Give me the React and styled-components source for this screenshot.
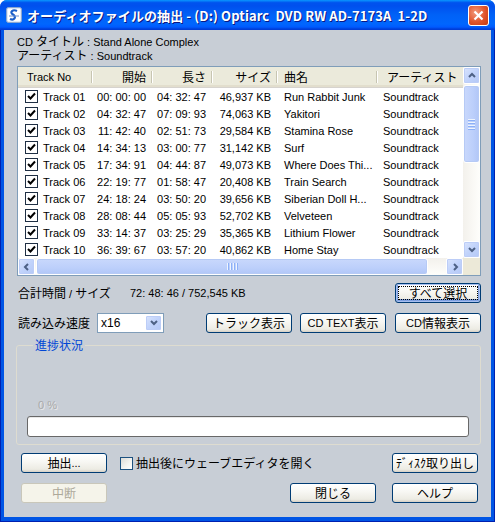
import React from "react";
import styled, { createGlobalStyle, css } from "styled-components";

const GlobalStyle = createGlobalStyle`
  html, body { margin: 0; padding: 0; background: #ffffff; }
  body {
    font-family: "Liberation Sans", "Noto Sans CJK JP", sans-serif;
    font-size: 11px;
    color: #000;
  }
  * { box-sizing: border-box; }
`;

const Jp = styled.span`
  font-family: "Noto Sans CJK JP", sans-serif;
  font-size: 12px;
`;

const Window = styled.div`
  width: 495px;
  height: 522px;
  display: flex;
  flex-direction: column;
  border-radius: 7px 7px 0 0;
  overflow: hidden;
  background: #0055e5;
`;

const TitleBar = styled.div`
  height: 30px;
  flex: none;
  display: flex;
  align-items: center;
  padding: 0 6px 0 6px;
  background: linear-gradient(
    180deg,
    #0997ff 0%,
    #0053ee 9%,
    #0050ee 20%,
    #0062f7 50%,
    #0066fe 80%,
    #005bff 90%,
    #003dd7 97%,
    #003dd7 100%
  );
`;

const TitleText = styled.div`
  margin-left: 5px;
  flex: 1;
  color: #fff;
  font-family: "Noto Sans CJK JP", sans-serif;
  font-weight: bold;
  font-size: 13px;
  letter-spacing: 0.1px;
  white-space: nowrap;
  text-shadow: 1px 1px 0 #0a1883;
`;

const CloseButton = styled.div`
  width: 21px;
  height: 21px;
  border: 1px solid #fff;
  border-radius: 3px;
  background: radial-gradient(circle at 35% 35%, #f29a7c 0%, #e0542b 55%, #c53a12 100%);
  display: flex;
  align-items: center;
  justify-content: center;
`;

const Frame = styled.div`
  flex: 1;
  display: flex;
  padding: 0 4px 5px 4px;
  background: #0055e5;
  box-shadow: inset 1px 0 #0020b0, inset -1px 0 #0020b0, inset 0 -1px #0020b0;
`;

const Body = styled.div`
  flex: 1;
  background: #c8ced6;
  padding: 4px 10px 0 13px;
  display: flex;
  flex-direction: column;
`;

const InfoLine = styled.div`
  height: 14px;
  line-height: 14px;
  white-space: nowrap;
`;

const ListBox = styled.div`
  margin-top: 4px;
  height: 210px;
  border: 1px solid #7f9db9;
  background: #fff;
  display: grid;
  grid-template-columns: 1fr 17px;
  grid-template-rows: 191px 17px;
`;

const ListArea = styled.div`
  overflow: hidden;
`;

const Header = styled.div`
  display: flex;
  height: 21px;
  background: #ebeadb;
  border-bottom: 1px solid #d6d3ce;
  box-shadow: inset 0 -2px #e2decd;
`;

const HeaderCell = styled.div`
  position: relative;
  flex: none;
  width: ${(p) => p.$w}px;
  padding: 0 ${(p) => (p.$right ? 6 : 0)}px 0 ${(p) => (p.$right ? 0 : p.$pl ?? 8)}px;
  display: flex;
  align-items: center;
  justify-content: ${(p) => (p.$right ? "flex-end" : "flex-start")};
  line-height: 14px;
  white-space: nowrap;
  &::after {
    content: "";
    position: absolute;
    right: 0;
    top: 4px;
    bottom: 4px;
    width: 1px;
    background: #c7c5b2;
    box-shadow: 1px 0 #fff;
  }
`;

const Row = styled.div`
  display: flex;
  height: 17px;
  align-items: center;
`;

const Cell = styled.div`
  flex: none;
  width: ${(p) => p.$w}px;
  display: flex;
  align-items: center;
  justify-content: ${(p) => (p.$right ? "flex-end" : "flex-start")};
  padding: 0 ${(p) => (p.$right ? p.$pr ?? 6 : 0)}px 0 ${(p) => (p.$right ? 0 : p.$pl ?? 7)}px;
  white-space: nowrap;
  overflow: hidden;
  line-height: 14px;
`;

const CheckBox = styled.div`
  width: 13px;
  height: 13px;
  flex: none;
  border: 1px solid ${(p) => (p.$light ? "#1c5180" : "#1f2f44")};
  background: ${(p) =>
    p.$light ? "linear-gradient(135deg, #dcdcd7 0%, #f5f5f2 60%, #ffffff 100%)" : "#fff"};
  display: flex;
  align-items: center;
  justify-content: center;
  margin-right: ${(p) => p.$mr ?? 5}px;
`;

const VScroll = styled.div`
  grid-row: 1;
  grid-column: 2;
  display: flex;
  flex-direction: column;
  background: linear-gradient(90deg, #f3f1ec 0%, #fefefb 100%);
`;

const HScroll = styled.div`
  grid-row: 2;
  grid-column: 1;
  display: flex;
  background: linear-gradient(180deg, #f3f1ec 0%, #fefefb 100%);
`;

const Corner = styled.div`
  grid-row: 2;
  grid-column: 2;
  background: #ece9d8;
`;

const ArrowBtn = styled.div`
  width: 17px;
  height: 17px;
  flex: none;
  border: 1px solid #fff;
  border-radius: 2px;
  background: linear-gradient(135deg, #d9e4fd 0%, #c1d3fb 50%, #b4c8f6 100%);
  box-shadow: inset 0 0 0 1px #bccdf7;
  display: flex;
  align-items: center;
  justify-content: center;
`;

const Track = styled.div`
  flex: 1;
  display: flex;
  flex-direction: ${(p) => (p.$vertical ? "column" : "row")};
  padding: ${(p) => (p.$vertical ? "1px 0" : "0 1px")};
`;

const Thumb = styled.div`
  flex: none;
  ${(p) =>
    p.$vertical
      ? css`
          height: ${p.$size}px;
          background: linear-gradient(90deg, #c9d8fc 0%, #bccffb 60%, #b1c6f7 100%);
          flex-direction: column;
        `
      : css`
          width: ${p.$size}px;
          background: linear-gradient(180deg, #c9d8fc 0%, #bccffb 60%, #b1c6f7 100%);
        `}
  border: 1px solid #fff;
  border-radius: 3px;
  box-shadow: inset 0 0 0 1px #b6caf5;
  display: flex;
  align-items: center;
  justify-content: center;
  gap: 1px;
`;

const Grip = styled.div`
  ${(p) =>
    p.$vertical
      ? css`
          width: 7px;
          height: 1px;
        `
      : css`
          width: 1px;
          height: 7px;
        `}
  background: #eef4fe;
  box-shadow: ${(p) => (p.$vertical ? "0 1px #8cb0f8" : "1px 0 #8cb0f8")};
  margin: ${(p) => (p.$vertical ? "0 0 1px 0" : "0 1px 0 0")};
`;

const FlexRow = styled.div`
  display: flex;
  align-items: center;
  margin-top: ${(p) => p.$mt}px;
`;

const Label = styled.div`
  white-space: nowrap;
  line-height: 14px;
  width: ${(p) => (p.$w ? `${p.$w}px` : "auto")};
  margin-left: ${(p) => p.$ml ?? 0}px;
  flex: none;
`;

const Spacer = styled.div`
  flex: 1;
`;

const Button = styled.div`
  width: 86px;
  height: 20px;
  flex: none;
  display: flex;
  align-items: center;
  justify-content: center;
  border: 1px solid ${(p) => (p.$disabled ? "#c9c7ba" : "#003c74")};
  border-radius: 3px;
  background: ${(p) =>
    p.$disabled
      ? "#f5f4ea"
      : "linear-gradient(180deg, #ffffff 0%, #f8f8f4 40%, #ecebe3 85%, #d6d0c5 100%)"};
  color: ${(p) => (p.$disabled ? "#aca899" : "#000")};
  white-space: nowrap;
  line-height: 14px;
  margin-left: ${(p) => p.$ml ?? 0}px;
  margin-right: ${(p) => p.$mr ?? 0}px;
  ${(p) =>
    p.$focused &&
    css`
      box-shadow: inset 0 0 0 1px #a7bff0, inset 0 -1px 0 2px #7d9fe0;
      outline: 1px dotted #000;
      outline-offset: -4px;
    `}
`;

const Select = styled.div`
  margin-left: ${(p) => p.$ml}px;
  width: 67px;
  height: 20px;
  border: 1px solid #7f9db9;
  background: #fff;
  display: flex;
  align-items: stretch;
`;

const SelectText = styled.div`
  flex: 1;
  padding-left: 3px;
  display: flex;
  align-items: center;
  font-size: 12px;
`;

const DropBtn = styled.div`
  width: 17px;
  margin: 1px;
  border: 1px solid #fff;
  border-radius: 2px;
  background: linear-gradient(135deg, #d9e4fd 0%, #c1d3fb 50%, #b4c8f6 100%);
  box-shadow: inset 0 0 0 1px #bccdf7;
  display: flex;
  align-items: center;
  justify-content: center;
`;

const Group = styled.fieldset`
  margin: 5px 0 0 -1px;
  padding: 46px 11px 7px 10px;
  border: 1px solid #dedcd0;
  border-radius: 3px;
  min-width: 0;
`;

const Legend = styled.legend`
  color: #0046d5;
  padding: 0 2px;
  margin-left: 6px;
  line-height: 14px;
`;

const Percent = styled.div`
  margin-left: 11px;
  line-height: 12px;
  font-size: 11px;
  color: #a9a9a9;
  text-shadow: 1px 1px 0 #e8e8e8;
`;

const Progress = styled.div`
  margin-top: 5px;
  height: 21px;
  border: 1px solid #686868;
  border-radius: 3px;
  background: #fff;
  box-shadow: inset 0 1px #e8e8e8;
`;

const CheckLabel = styled.div`
  display: flex;
  align-items: center;
  margin-left: ${(p) => p.$ml}px;
  white-space: nowrap;
  line-height: 14px;
`;

const COLS = [74, 60, 60, 65, 100, 120];

const tracks = [
  ["Track 01", "00: 00: 00", "04: 32: 47", "46,937 KB", "Run Rabbit Junk"],
  ["Track 02", "04: 32: 47", "07: 09: 93", "74,063 KB", "Yakitori"],
  ["Track 03", "11: 42: 40", "02: 51: 73", "29,584 KB", "Stamina Rose"],
  ["Track 04", "14: 34: 13", "03: 00: 77", "31,142 KB", "Surf"],
  ["Track 05", "17: 34: 91", "04: 44: 87", "49,073 KB", "Where Does Thi..."],
  ["Track 06", "22: 19: 77", "01: 58: 47", "20,408 KB", "Train Search"],
  ["Track 07", "24: 18: 24", "03: 50: 20", "39,656 KB", "Siberian Doll H..."],
  ["Track 08", "28: 08: 44", "05: 05: 93", "52,702 KB", "Velveteen"],
  ["Track 09", "33: 14: 37", "03: 25: 29", "35,365 KB", "Lithium Flower"],
  ["Track 10", "36: 39: 67", "03: 57: 20", "40,862 KB", "Home Stay"],
];

const Check = () => (
  <svg width="9" height="9" viewBox="0 0 9 9">
    <path d="M1 4 L3.5 6.5 L8 1.5" stroke="#000" strokeWidth="2" fill="none" />
  </svg>
);

const Chevron = ({ dir }) => {
  const paths = {
    up: "M2 6 L5 3 L8 6",
    down: "M2 3 L5 6 L8 3",
    left: "M6 2 L3 5 L6 8",
    right: "M4 2 L7 5 L4 8",
  };
  return (
    <svg width="10" height="10" viewBox="0 0 10 10">
      <path d={paths[dir]} stroke="#4d6185" strokeWidth="2" fill="none" />
    </svg>
  );
};

const AppIcon = () => (
  <svg width="16" height="16" viewBox="0 0 16 16">
    <rect x="0.5" y="0.5" width="15" height="15" rx="2" fill="#dfe9f7" stroke="#8aa6d0" />
    <rect x="2" y="2" width="12" height="12" fill="#ffffff" />
    <path d="M11 4 C7 2, 3 5, 7 7.5 C11 10, 8 14, 4 12" stroke="#1b5fc9" strokeWidth="2.2" fill="none" />
    <path d="M3 9 L13 9" stroke="#6a8fd0" strokeWidth="1" />
  </svg>
);

const CloseX = () => (
  <svg width="11" height="11" viewBox="0 0 11 11">
    <path d="M1.5 1.5 L9.5 9.5 M9.5 1.5 L1.5 9.5" stroke="#fff" strokeWidth="2.2" />
  </svg>
);

export default function App() {
  return (
    <>
      <GlobalStyle />
      <Window>
        <TitleBar>
          <AppIcon />
          <TitleText>オーディオファイルの抽出 - (D:) Optiarc&nbsp;&nbsp;DVD RW AD-7173A&nbsp;&nbsp;1-2D</TitleText>
          <CloseButton>
            <CloseX />
          </CloseButton>
        </TitleBar>
        <Frame>
          <Body>
            <InfoLine>CD <Jp>タイトル</Jp> : Stand Alone Complex</InfoLine>
            <InfoLine><Jp>アーティスト</Jp> : Soundtrack</InfoLine>
            <ListBox>
              <ListArea>
                <Header>
                  <HeaderCell $w={COLS[0]} $pl={9}>Track No</HeaderCell>
                  <HeaderCell $w={COLS[1]} $right><Jp>開始</Jp></HeaderCell>
                  <HeaderCell $w={COLS[2]} $right><Jp>長さ</Jp></HeaderCell>
                  <HeaderCell $w={COLS[3]} $right><Jp>サイズ</Jp></HeaderCell>
                  <HeaderCell $w={COLS[4]} $pl={7}><Jp>曲名</Jp></HeaderCell>
                  <HeaderCell $w={COLS[5]} $pl={10}><Jp>アーティスト</Jp></HeaderCell>
                </Header>
                {tracks.map((t) => (
                  <Row key={t[0]}>
                    <Cell $w={COLS[0]} $pl={7}>
                      <CheckBox>
                        <Check />
                      </CheckBox>
                      {t[0]}
                    </Cell>
                    <Cell $w={COLS[1]} $right>{t[1]}</Cell>
                    <Cell $w={COLS[2]} $right>{t[2]}</Cell>
                    <Cell $w={COLS[3]} $right>{t[3]}</Cell>
                    <Cell $w={COLS[4]} $pl={7}>{t[4]}</Cell>
                    <Cell $w={COLS[5]} $pl={6}>Soundtrack</Cell>
                  </Row>
                ))}
              </ListArea>
              <VScroll>
                <ArrowBtn>
                  <Chevron dir="up" />
                </ArrowBtn>
                <Track $vertical>
                  <Thumb $vertical $size={78}>
                    <Grip $vertical />
                    <Grip $vertical />
                    <Grip $vertical />
                    <Grip $vertical />
                  </Thumb>
                </Track>
                <ArrowBtn>
                  <Chevron dir="down" />
                </ArrowBtn>
              </VScroll>
              <HScroll>
                <ArrowBtn>
                  <Chevron dir="left" />
                </ArrowBtn>
                <Track>
                  <Thumb $size={392}>
                    <Grip />
                    <Grip />
                    <Grip />
                    <Grip />
                  </Thumb>
                </Track>
                <ArrowBtn>
                  <Chevron dir="right" />
                </ArrowBtn>
              </HScroll>
              <Corner />
            </ListBox>

            <FlexRow $mt={7}>
              <Label $w={112} $ml={1}><Jp>合計時間</Jp> / <Jp>サイズ</Jp></Label>
              <Label>72: 48: 46 / 752,545 KB</Label>
              <Spacer />
              <Button $focused><Jp>すべて選択</Jp></Button>
            </FlexRow>

            <FlexRow $mt={10}>
              <Label $w={79} $ml={1}><Jp>読み込み速度</Jp></Label>
              <Select $ml={0}>
                <SelectText>x16</SelectText>
                <DropBtn>
                  <Chevron dir="down" />
                </DropBtn>
              </Select>
              <Spacer />
              <Button><Jp>トラック表示</Jp></Button>
              <Button $ml={8}>CD TEXT<Jp>表示</Jp></Button>
              <Button $ml={9}>CD<Jp>情報表示</Jp></Button>
            </FlexRow>

            <Group>
              <Legend><Jp>進捗状況</Jp></Legend>
              <Percent>0 %</Percent>
              <Progress />
            </Group>

            <FlexRow $mt={8}>
              <Button $ml={4}><Jp>抽出</Jp>...</Button>
              <CheckLabel $ml={13}>
                <CheckBox $light $mr={3} />
                <Jp>抽出後にウェーブエディタを開く</Jp>
              </CheckLabel>
              <Spacer />
              <Button $mr={3}><Jp>ﾃﾞｨｽｸ取り出し</Jp></Button>
            </FlexRow>

            <FlexRow $mt={10}>
              <Button $ml={4} $disabled><Jp>中断</Jp></Button>
              <Spacer />
              <Button><Jp>閉じる</Jp></Button>
              <Button $ml={16} $mr={3}><Jp>ヘルプ</Jp></Button>
            </FlexRow>
          </Body>
        </Frame>
      </Window>
    </>
  );
}
